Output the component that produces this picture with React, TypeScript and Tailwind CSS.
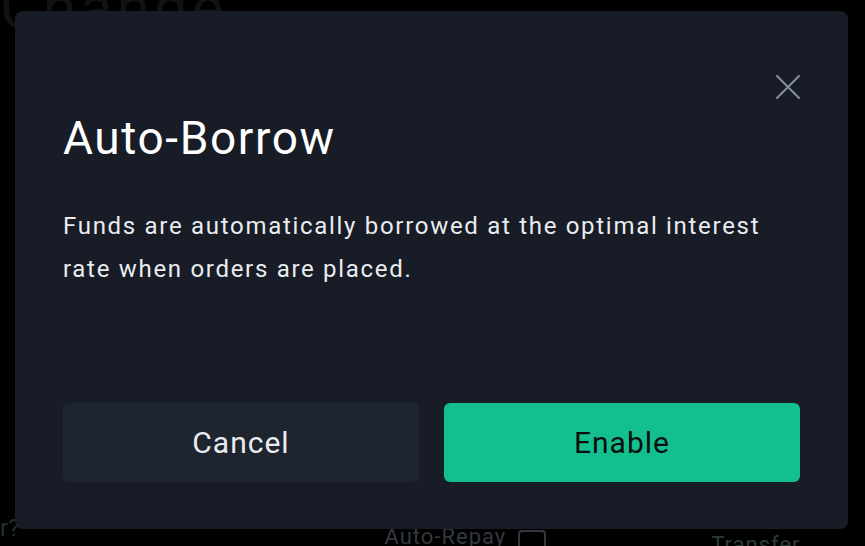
// Auto-Borrow confirmation modal over a dimmed trading page
const App = () => {
  return (
    <div className="relative w-[865px] h-[546px] overflow-hidden bg-black font-['Roboto','Liberation_Sans',sans-serif]">
      {/* dimmed page behind the overlay */}
      <div className="flex h-full flex-col justify-between">
        <div className="-mt-[22px] text-[60px] leading-none tracking-[4px] text-[#111214]">Change</div>
        <div className="flex items-end">
          <span className="mb-[6px] text-[24px] leading-none text-[#24302d]">r?</span>
          <div className="ml-[365px] flex items-end gap-[12px]">
            <span className="-mb-[4px] border-b-2 border-dashed border-[#33383f] text-[22px] leading-none tracking-[1px] text-[#33383f]">
              Auto-Repay
            </span>
            <span className="-mb-[14px] h-[30px] w-[28px] rounded-[4px] border-2 border-[#33383f]" />
          </div>
          <span className="-mb-[10px] ml-[165px] text-[22px] leading-none tracking-[1px] text-[#2e3a38]">Transfer</span>
        </div>
      </div>

      {/* modal */}
      <div className="absolute left-[15px] top-[11px] flex h-[518px] w-[833px] flex-col rounded-[8px] bg-[#171c27] px-[48px] pb-[47px] pt-[64px]">
        <div className="flex justify-end">
          <button className="flex h-[24px] w-[24px] items-center justify-center">
            <svg width="24" height="24" viewBox="0 0 24 24" fill="none" stroke="#848e9c" strokeWidth="2" strokeLinecap="round">
              <path d="M1 1L23 23M23 1L1 23" />
            </svg>
          </button>
        </div>
        <h2 className="mt-[12px] text-[46px] leading-[55px] tracking-[1.6px] text-white">Auto-Borrow</h2>
        <p className="mt-[39px] text-[24px] leading-[43px] tracking-[1.7px] text-[#eaecef]">
          Funds are automatically borrowed at the optimal interest
          <br />
          rate when orders are placed.
        </p>
        <div className="mt-auto flex gap-[25px]">
          <button className="flex h-[79px] flex-1 items-center justify-center rounded-[6px] bg-[#1f252f] text-[30px] tracking-[1px] text-[#eaecef]">
            Cancel
          </button>
          <button className="flex h-[79px] flex-1 items-center justify-center rounded-[6px] bg-[#14bf8e] text-[30px] tracking-[1px] text-[#0b0e11]">
            Enable
          </button>
        </div>
      </div>
    </div>
  );
};

export default App;
